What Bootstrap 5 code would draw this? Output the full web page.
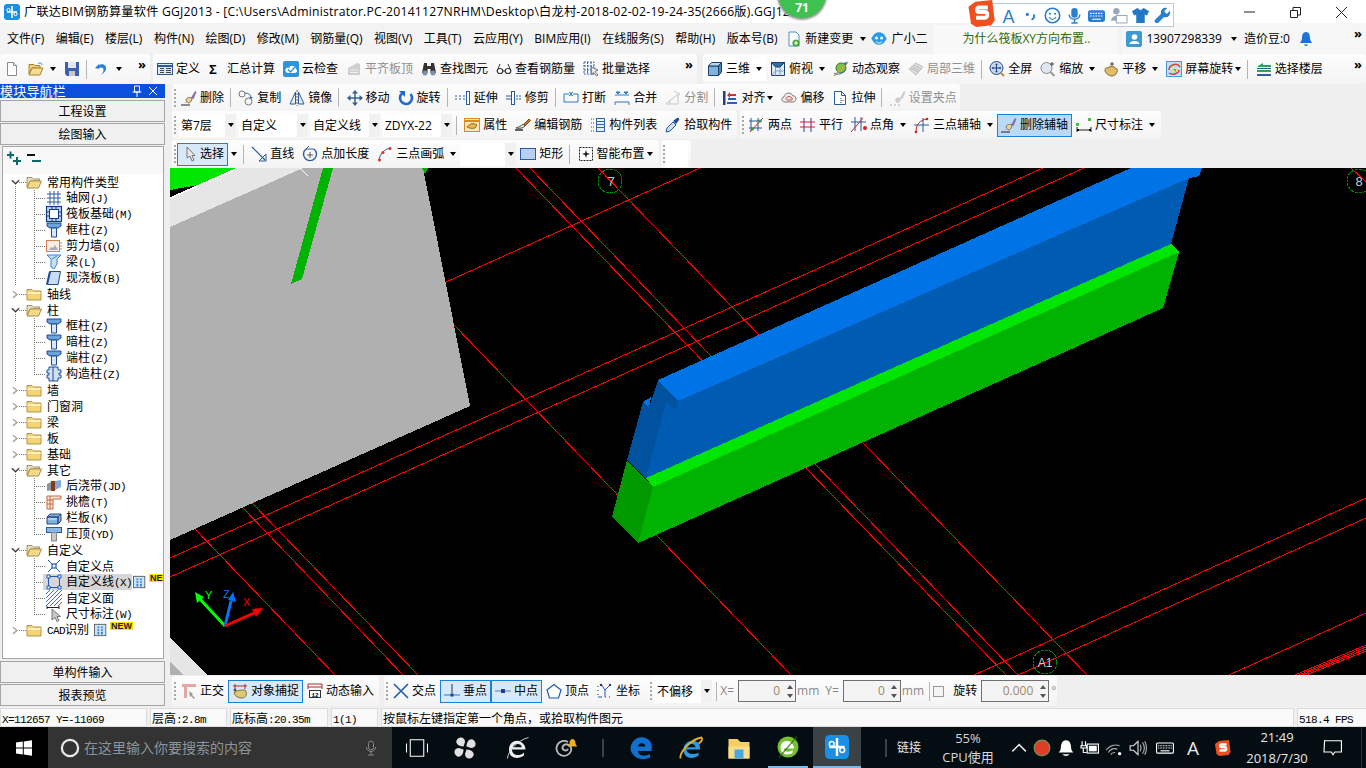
<!DOCTYPE html>
<html lang="zh-CN">
<head>
<meta charset="UTF-8">
<title>广联达BIM钢筋算量软件 GGJ2013</title>
<link href="https://cdn.jsdelivr.net/npm/bootstrap@5.3.3/dist/css/bootstrap.min.css" rel="stylesheet">
<style>
html,body{height:100%;overflow:hidden}
body{width:1366px;height:768px;background:#efefef;color:#000;font:12px/16px "Open Sans","Noto Sans CJK SC",sans-serif}
.ico{width:16px;height:16px;flex:none;display:block;overflow:visible}
.lat{font:11px/16px "Liberation Mono",monospace;letter-spacing:-.6px}
.simfont{font-family:"Noto Sans CJK SC",sans-serif}

/* title + menu */
.title-bar{height:23px;background:#fff;white-space:nowrap;overflow:hidden}
.title-bar .ttl{margin-left:4px;font-size:12.2px;letter-spacing:.22px;line-height:23px;width:772px;overflow:hidden}
.win-btn{width:46px;height:23px}
.win-group{margin-right:2px}
.float-badge{position:absolute;left:778px;top:-30px;width:48px;height:48px;border-radius:50%;background:#3fc152;box-shadow:0 1px 2px 1px #999;color:#fff;font-weight:700;text-align:center;padding-top:31px;line-height:14px}
.sg-logo{position:absolute;left:968px;top:0;width:28px;height:27px}
.sg-panel{position:absolute;left:990px;top:3px;width:184px;height:24px;background:#fff;border:1px solid #b4cbde;padding-left:5px;gap:5px}
.sg-panel .ico{width:17px;height:17px}
.menu-row{height:31px;background:#f3f3f3}
.menu-row .mi{padding:0 5.75px;line-height:31px;white-space:nowrap}
.menu-row .mi:first-child{padding-left:7px}
.menu-tail{height:31px;margin-left:3px}
.menu-tail .car{margin-left:7px}
.menu-tail .xe{margin-left:5px}
.news{width:185px;height:29px;background:#f8f8f8;margin:2px 4px 0 6px;border-radius:3px 3px 0 0;color:#2f6a0a;padding-left:29px;line-height:27px}
.user-box{height:31px;background:#f6f6f6}
.user-box .car{margin:0 7px 0 9px}

/* toolbars */
.tbar{height:28px;background:linear-gradient(#fdfdfd,#f4f4f4);border-radius:3px;white-space:nowrap;flex:none}
.t-top{height:30px}
.t-fill{flex:1 1 0;min-width:0}
.tool{display:flex;align-items:center;height:23px;padding:0 3px;gap:3px;border:1px solid transparent;flex:none}
.tool-off{color:#8f8f8f}
.tool-on{background:#d7e9f8;border-color:#1a80d8}
.tool-on2{background:#b9d9f5;border-color:#1a80d8}
.tool-first{padding-left:5px;gap:1px}
.tool-white{background:#fff}
.t-sep{width:1px;height:19px;background:#b5b5b5;margin:0 3.25px 0 2px;flex:none}
.t-grip{width:5px;height:18px;flex:none;background:repeating-linear-gradient(#a8a8a8 0 2px,transparent 2px 4px) 2px 0/2px 100% no-repeat}
.car{width:0;height:0;border:3.5px solid transparent;border-top:4px solid #000;border-bottom:0;margin-left:-1px;flex:none}
.car-wide{margin-left:2.5px;margin-right:.5px}
.car-solo{margin:0 4px 0 3px}
.tool>svg+.car{margin-left:3px}
.more{margin-left:auto;padding-right:4px;font-weight:700;font-size:13px;line-height:12px;align-self:flex-start;padding-top:4px}
.combo{height:23px;background:#f1f1f1;margin-left:3px;flex:none}
.t-grip+.combo{margin-left:2px}
.tool+.combo{margin-left:0}
.combo+.t-sep{margin-left:4px}
.combo>span{display:block;flex:1;height:23px;background:#fff;line-height:23px;padding-left:2px;overflow:hidden}
.combo>i{width:11px;display:flex;justify-content:center;align-items:center}
.combo .car{margin:0}
.row-a{height:27px;margin-left:2px}
.row-b{height:29px;margin-left:2px}
.row-c{height:28px;margin-left:2px}
.blank-tail{width:22px;height:26px;background:#fff}

/* left nav */
.nav-col{width:165px;flex:none}
.nav-head{height:14px;background:#0a50dc;color:#fff;font-size:13px;line-height:14px;letter-spacing:.2px;margin-bottom:2px}
.nav-btn{display:block;width:165px;height:22px;padding:0;border:1px solid #a5a5a5;border-radius:0;background:#f0f0f0;color:#000;font-size:12px;line-height:20px;margin-bottom:1px}
.nav-box{height:513px;margin:0 1px 2px 2px;background:#fff;border:1px solid #a5a5a5;overflow:hidden}
.tree-tools{height:27px;background:#f8f8f8;padding:3px 0 0 3px}
.tree-row{height:16px;display:flex;align-items:center;white-space:nowrap;padding-left:8px;
  --vd:repeating-linear-gradient(#777 0 1px,transparent 1px 2px);--hd:repeating-linear-gradient(90deg,#777 0 1px,transparent 1px 2px)}
.tree-row .chev{width:9px;height:9px;flex:none;margin-right:6px}
.tree-row .lb{margin-left:5px}
.lv0{background:var(--hd) 16px 8px/7px 1px no-repeat}
.lv0.is-open{background:var(--hd) 16px 8px/7px 1px no-repeat,var(--vd) 12px 12px/1px 4px no-repeat}
.lv1{padding-left:43px;background:var(--vd) 12px 0/1px 16px no-repeat,var(--vd) 31px 0/1px 16px no-repeat,var(--hd) 31px 8px/12px 1px no-repeat}
.lv1.is-last{background:var(--vd) 12px 0/1px 16px no-repeat,var(--vd) 31px 0/1px 9px no-repeat,var(--hd) 31px 8px/12px 1px no-repeat}
.lv1 .lb{margin-left:4px}
.tree-sel{background:#d6d6d6;display:flex;align-items:center;margin-left:-3px;padding-left:3px;height:16px}
.new-ico{width:14px;height:16px;flex:none;margin-left:1px}
.new-tag{font:700 9px/8px "Liberation Sans",sans-serif;background:#ffe000;color:#222;padding:0 1px;align-self:flex-start;margin-left:2px}

/* canvas + bottom */
.gl-view{display:block;width:1196px;height:507px;background:#000}
.snap-bar{height:33px;padding:1px 0 0 2px;background:#efefef}
.snap-bar .tbar{height:30px}
.num{width:58px;height:22px;border:1px solid #707070;background:#f4f4f4;color:#a08868;text-align:right;flex:none;line-height:20px}
.num-wide{width:68px}
.num>span{flex:1;padding-right:4px}
.spin{width:11px;display:flex;flex-direction:column;align-items:center;gap:5px}
.spin i{border:3px solid transparent}
.spin .u{border-bottom:4px solid #555;border-top:0}
.spin .d{border-top:4px solid #555;border-bottom:0}
.mut{color:#8a8a8a;flex:none}
.chk{width:11px;height:11px;border:1px solid #999;background:#f4f4f4;margin-right:9px;flex:none}
.g1{margin-left:1px}.g2{margin-left:2px}.g3{margin-left:3px}.g4{margin-left:4px}.g5{margin-left:5px}.g6{margin-left:6px}

/* status */
.stat{height:19px;gap:3px}
.stat>div{height:19px;background:#f9f9f9;border:1px solid #dcdcdc;padding-left:1px;line-height:17px;white-space:nowrap;overflow:hidden;flex:none}

/* taskbar */
.taskbar{height:41px;background:#040d12;color:#e8e8e8}
.task-win{width:48px;height:41px;background:#000}
.task-search{width:344px;height:41px;background:#333;color:#8c939c;font-size:14px;padding-left:12px}
.search-ring{width:20px;height:20px}
.search-mic{margin-right:13px}
.slot{height:41px;display:flex;align-items:center;justify-content:center;flex:none}
.slot .ico{width:24px;height:24px}
.slot-on{background:#3a4246;border-bottom:2px solid #76b9ed}
.slot-open{border-bottom:2px solid #76b9ed}
.t-div{width:2px;height:18px;background:#3b4246;flex:none}
.tray{gap:6px;margin-left:11px}
.tray .ico{width:18px;height:18px}
.tray .kb{width:24px}
.tray .sg{width:16px;height:16px;margin-left:8px}
.tray .big-a{font-size:19px;line-height:18px;margin-left:4px;width:14px}
.links{margin-left:10px;width:24px;white-space:nowrap}
.cpu{font-size:13px;line-height:19px;text-align:center;width:60px;color:#d8d8d8;margin-left:17px}
.clk{font-size:13px;line-height:21px;text-align:center;color:#e8e8e8;width:64px;margin-left:14px}
.notif-ico{width:18px;height:18px;margin-left:15px}
.desk-line{width:1px;height:41px;background:#2a3036;margin-left:19px}
</style>
</head>
<body class="d-flex flex-column position-relative">

<!-- title bar -->
<div class="title-bar d-flex align-items-center">
  <svg class="ico ms-1" data-i="app"></svg>
  <div class="ttl">广联达BIM钢筋算量软件 GGJ2013 - [C:\Users\Administrator.PC-20141127NRHM\Desktop\白龙村-2018-02-02-19-24-35(2666版).GGJ12</div>
  <div class="ms-auto d-flex win-group">
    <div class="win-btn d-flex align-items-center justify-content-center"><svg class="ico" data-i="wmin"></svg></div>
    <div class="win-btn d-flex align-items-center justify-content-center"><svg class="ico" data-i="wmax"></svg></div>
    <div class="win-btn d-flex align-items-center justify-content-center"><svg class="ico" data-i="wclose"></svg></div>
  </div>
</div>
<div class="float-badge">71</div>
<div class="sg-panel d-flex align-items-center">
  <svg class="ico ms-1" data-i="sgA"></svg><svg class="ico" data-i="sgP"></svg><svg class="ico" data-i="sgF"></svg><svg class="ico" data-i="sgM"></svg><svg class="ico" data-i="sgK"></svg><svg class="ico" data-i="sgU"></svg><svg class="ico" data-i="sgT"></svg><svg class="ico" data-i="sgW"></svg>
</div>
<svg class="sg-logo" data-i="sogou"></svg>

<!-- menu -->
<div class="menu-row d-flex align-items-start">
  <div class="d-flex align-items-center" id="menus"></div>
  <div class="d-flex align-items-center menu-tail">
    <svg class="ico" data-i="newchg"></svg><span class="g3">新建变更</span><i class="car"></i>
    <svg class="ico xe" data-i="xiaoer"></svg><span class="g4">广小二</span>
  </div>
  <div class="news">为什么筏板XY方向布置..</div>
  <div class="d-flex align-items-center flex-grow-1 user-box">
    <svg class="ico g4" data-i="user"></svg><span class="g4">13907298339</span><i class="car"></i><span>造价豆:0</span>
    <svg class="ico ms-2" data-i="bellb"></svg><span class="more">»</span>
  </div>
</div>

<!-- main toolbar -->
<div class="d-flex" style="height:30px">
  <div class="tbar t-top d-flex align-items-center" style="width:150px" data-spec="page: open:v save: | undo:v"><span class="more">»</span></div>
  <div class="tbar t-top d-flex align-items-center" style="width:544px;margin-left:3px" data-spec="define:定义 sigma:汇总计算 cloudchk:云检查 flush:平齐板顶! binoc:查找图元 glass:查看钢筋量 batch:批量选择"><span class="more">»</span></div>
  <div class="tbar t-top t-fill d-flex align-items-center" style="margin-left:6px" data-spec="cube:三维V# topv:俯视V orbit:动态观察 part3d:局部三维! | fit:全屏 zoomin:缩放V pan:平移V spin3:屏幕旋转v | floor:选择楼层"><span class="more">»</span></div>
</div>

<div class="d-flex flex-grow-1" style="min-height:0">
  <!-- left nav -->
  <div class="nav-col d-flex flex-column">
    <div class="nav-head d-flex align-items-center"><span class="simfont">模块导航栏</span><svg class="ico ms-auto" data-i="pinw"></svg><svg class="ico me-1" data-i="closew"></svg></div>
    <button class="btn nav-btn simfont" type="button">工程设置</button>
    <button class="btn nav-btn simfont" type="button">绘图输入</button>
    <div class="nav-box">
      <div class="tree-tools d-flex"><svg class="ico" data-i="plus2"></svg><svg class="ico ms-1" data-i="minus2"></svg></div>
      <div class="simfont" id="tree"></div>
    </div>
    <button class="btn nav-btn simfont" type="button">单构件输入</button>
    <button class="btn nav-btn simfont" type="button">报表预览</button>
  </div>

  <!-- right work area -->
  <div class="d-flex flex-column flex-grow-1" style="margin-left:5px;min-width:0">
    <div class="d-flex row-a">
      <div class="tbar d-flex align-items-center" style="width:788px;height:27px" data-spec="grip erase:删除 | copy:复制 mirror:镜像 | move:移动 rot:旋转 | extend:延伸 trim:修剪 | brk:打断 merge:合并 split:分割! | align:对齐v offset:偏移 stretch:拉伸 | erasegray:设置夹点!"></div>
    </div>
    <div class="d-flex row-b">
      <div class="tbar d-flex align-items-center" style="width:565px" data-spec="grip [57:第7层] [69:自定义] [69:自定义线] [69:ZDYX-22] | attr:属性 rebar:编辑钢筋 lst:构件列表 pick:拾取构件"></div>
      <div class="tbar d-flex align-items-center" style="width:421px;margin-left:3px" data-spec="grip two:两点 para:平行 angle:点角V arc3:三点辅轴V erase:删除辅轴% dim:尺寸标注V"></div>
    </div>
    <div class="d-flex row-c">
      <div class="tbar d-flex align-items-center" style="width:487px" data-spec="grip arrow:选择~ car | line:直线 plen:点加长度 arc:三点画弧V [56:] rect:矩形 | smart:智能布置v"></div>
      <div class="tbar d-flex align-items-center" style="width:30px;margin-left:2px" data-spec="grip"><span class="blank-tail"></span></div>
    </div>

    <!-- 3D view -->
    <svg class="gl-view" viewBox="170 168 1196 507" shape-rendering="crispEdges">
      <g stroke="#f00" stroke-width="1" fill="none">
        <path d="M700 168 446 282M1043 168 170 558M1084 168 170 577"/>
        <path d="M598 168 1087 675M530 168 1018 675M516 168 1006 675M454 325 791 675"/>
        <path d="M195 529 335 675M252 503 418 675M243 508 403 675"/>
        <path d="M974 675 1366 498M1018 675 1366 518M1229 675 1366 613"/>
        <path d="M1295 675 1366 645M1299 675 1366 647M1302 675 1366 649M1306 675 1366 651"/>
        <path d="M1351 168 1366 182"/>
      </g>
      <!-- slab -->
      <path d="M170 168H293L170 190z" fill="#00e600"/>
      <path d="M170 198 238 168H303L170 227z" fill="#e6e6e6"/>
      <path d="M170 198 238 168" stroke="#fff" stroke-width="1.5" fill="none"/>
      <path d="M170 227 303 168H423L470 406 170 540z" fill="#b0b0b0"/>
      <path d="M300 168 308 176" stroke="#fff" fill="none"/>
      <path d="M323 168H333L302 279 291 284z" fill="#00b300"/>
      <path d="M422 168H428L425 174z" fill="#00b300"/>
      <path d="M170 637 207 675H170z" fill="#e6e6e6"/>
      <path d="M170 662 183 675H170z" fill="#b0b0b0"/>
      <!-- wall -->
      <path d="M678 401 676 410 666 402 646 478 1171 244 1189 178z" fill="#005cb3"/>
      <path d="M643 402 649 408 658 380 666 402 646 478 627 460z" fill="#00529f"/>
      <path d="M658 380 678 401 676 410 666 402z" fill="#00529f"/>
      <path d="M658 380 1131 168H1202L1199 176 1189 178 678 401z" fill="#0073e6"/>
      <path d="M643 402 651 397 649 408z" fill="#0073e6"/>
      <path d="M646 478 1171 244 1179 252 653 487z" fill="#00e600"/>
      <path d="M653 487 1179 252 1163 308 638 543z" fill="#00b300"/>
      <path d="M627 460 653 487 638 543 612 517z" fill="#009900"/>
      <!-- axis bubbles -->
      <g fill="none" stroke="#080" stroke-dasharray="3 1">
        <circle cx="610" cy="181" r="12"/><circle cx="1359" cy="181" r="12"/><circle cx="1045" cy="662" r="12"/>
      </g>
      <g fill="#ccc" font-family="Liberation Sans,sans-serif" font-size="13" text-anchor="middle">
        <text x="611" y="186">7</text><text x="1359" y="186">8</text><text x="1045" y="667" font-size="12">A1</text>
      </g>
      <!-- ucs -->
      <g shape-rendering="auto">
        <path d="M225 626 199 598" stroke="#0f0" stroke-width="3"/><path d="M195 592 204 597 197 603z" fill="#0f0"/>
        <path d="M225 626 231 601" stroke="#07f" stroke-width="3"/><path d="M233 592 236 602 228 600z" fill="#07f"/>
        <path d="M225 626 254 613" stroke="#f00" stroke-width="3"/><path d="M263 608 256 617 252 609z" fill="#f00"/>
        <g font-family="Liberation Sans,sans-serif" font-size="11"><text x="205" y="599" fill="#0f0">Y</text><text x="223" y="598" fill="#07f">Z</text><text x="243" y="606" fill="#f00">X</text></g>
      </g>
    </svg>

    <!-- snap bar -->
    <div class="snap-bar d-flex">
      <div class="tbar d-flex align-items-center" style="width:207px" data-spec="grip ortho:正交 snap:对象捕捉^ dyn:动态输入"></div>
      <div class="tbar d-flex align-items-center" style="width:264px;margin-left:5px" data-spec="grip xpt:交点 perp:垂点^ mid:中点^ vertex:顶点 coord:坐标"></div>
      <div class="tbar d-flex align-items-center" style="width:409px" data-spec="grip [57:不偏移] |">
        <span class="mut">X=</span>
        <div class="num d-flex align-items-center g4"><span>0</span><div class="spin"><i class="u"></i><i class="d"></i></div></div>
        <span class="mut g1">mm</span><span class="mut g6">Y=</span>
        <div class="num d-flex align-items-center g4"><span>0</span><div class="spin"><i class="u"></i><i class="d"></i></div></div>
        <span class="mut g1">mm</span><span class="t-sep g5"></span>
        <span class="chk"></span><span class="flex-none">旋转</span>
        <div class="num num-wide d-flex align-items-center g4"><span>0.000</span><div class="spin"><i class="u"></i><i class="d"></i></div></div>
        <span class="mut g2">°</span>
      </div>
    </div>
  </div>
</div>

<!-- status bar -->
<div class="stat d-flex simfont" id="stat">
  <div style="width:147px" data-l>X=112657 Y=-11069</div>
  <div style="width:77px" data-l>层高:2.8m</div>
  <div style="width:98px" data-l>底标高:20.35m</div>
  <div style="width:47px" data-l>1(1)</div>
  <div style="width:913px">按鼠标左键指定第一个角点，或拾取构件图元</div>
  <div style="width:70px" data-l>518.4 FPS</div>
</div>

<!-- taskbar -->
<div class="taskbar d-flex align-items-center">
  <div class="task-win d-flex align-items-center justify-content-center"><svg class="ico" data-i="winlogo"></svg></div>
  <div class="task-search d-flex align-items-center">
    <svg class="ico search-ring" data-i="cortana"></svg>
    <span class="ms-1">在这里输入你要搜索的内容</span>
    <svg class="ico ms-auto search-mic" data-i="mic"></svg>
  </div>
  <div class="d-flex" id="apps"></div>
  <div class="t-div" style="margin-left:24px"></div>
  <span class="links">链接</span>
  <div class="cpu">55%<br>CPU使用</div>
  <div class="tray d-flex align-items-center">
    <svg class="ico" data-i="chevup"></svg><svg class="ico" data-i="ball"></svg><svg class="ico" data-i="bellw"></svg><svg class="ico" data-i="batt"></svg><svg class="ico" data-i="wifi"></svg><svg class="ico" data-i="vol"></svg><svg class="ico kb" data-i="kbd"></svg><span class="big-a">A</span><svg class="ico sg" data-i="sogou"></svg>
  </div>
  <div class="clk">21:49<br>2018/7/30</div>
  <svg class="ico notif-ico" data-i="notif"></svg>
  <div class="desk-line"></div>
</div>

<script>
// icon shapes, all drawn on a 16x16 box
const I = {
  app:'<rect width="16" height="16" rx="3" fill="#1a8fe6"/><path d="M8 2v12M3 8h10" stroke="#fff" stroke-width="1.6" fill="none"/><circle cx="4.5" cy="6" r="1.6" fill="none" stroke="#fff"/><circle cx="11.5" cy="10" r="1.6" fill="none" stroke="#fff"/>',
  wmin:'<path d="M3 8h11" stroke="#222"/>', wmax:'<path d="M3.5 6.5h7v7h-7zM6 6V3.5h7.5V11H11" stroke="#222" fill="none"/>', wclose:'<path d="M3 3l11 11M14 3 3 14" stroke="#222" fill="none"/>',
  sogou:'<path d="M4 1 14 0l1.5 12-2 3-9 1-3-2L0 4z" fill="#f0501e"/><path d="M11.5 4.5H6.2c-1.5 0-1.5 2.6 0 2.6h3.6c1.7 0 1.7 3.4 0 3.4H4.5" stroke="#fff" stroke-width="2.4" fill="none"/>',
  sgA:'<text x="8" y="15" font-family="Liberation Sans,sans-serif" font-size="17" text-anchor="middle" fill="#2b7fcf">A</text>',
  sgP:'<circle cx="5" cy="7" r="1.5" fill="#2b7fcf"/><path d="M11 7c1 2 0 4-2 5" stroke="#2b7fcf" stroke-width="1.8" fill="none"/>',
  sgF:'<circle cx="8" cy="8" r="6.8" fill="none" stroke="#2b7fcf" stroke-width="1.5"/><circle cx="5.6" cy="6.3" r="1" fill="#2b7fcf"/><circle cx="10.4" cy="6.3" r="1" fill="#2b7fcf"/><path d="M4.8 9.5c1.5 3 5 3 6.4 0" stroke="#2b7fcf" fill="none"/>',
  sgM:'<rect x="5" y="1" width="6" height="9" rx="3" fill="#2b7fcf"/><path d="M3 7c0 6 10 6 10 0M8 12v3M5 15h6" stroke="#2b7fcf" stroke-width="1.4" fill="none"/>',
  sgK:'<rect y="3" width="16" height="11" rx="2" fill="#2b7fcf"/><path d="M2 6h12M2 8.5h12" stroke="#fff" stroke-dasharray="1.5 1" fill="none"/><path d="M4 11.5h8" stroke="#fff"/>',
  sgU:'<circle cx="6" cy="4" r="3" fill="#9aa8b5"/><path d="M1 13c0-6 9-6 9 0z" fill="#9aa8b5"/><rect x="6" y="8" width="10" height="7" fill="#fff" stroke="#9aa8b5"/>',
  sgT:'<path d="M5 1 8 3l3-2 5 3-2 4-2-1v8H4V7L2 8 0 4z" fill="#1f78c8"/>',
  sgW:'<path d="M15 3.5 12 6.5 9.5 4 12.5 1a4.5 4.5 0 0 0-6 5.5L1 12c-1.5 2 1 4 3 2.8L9.5 9.5A4.5 4.5 0 0 0 15 3.5z" fill="#2b7fcf"/>',
  newchg:'<path d="M3 1h7l3 3v11H3z" fill="#fff" stroke="#4a90d0"/><circle cx="10" cy="12" r="3.6" fill="#4aa83a"/><path d="M8 12h4M10 10v4" stroke="#fff"/>',
  xiaoer:'<path d="M2 5c2-5 10-5 12 0 2 1 2 4 0 5-2 5-10 5-12 0-2-1-2-4 0-5z" fill="#2b9ae8"/><circle cx="5.5" cy="7" r="1.5" fill="#fff"/><circle cx="10.5" cy="7" r="1.5" fill="#fff"/><path d="M5 10.5c2 2 4 2 6 0" stroke="#fff" fill="none"/>',
  user:'<rect width="16" height="16" rx="2" fill="#3d9ad0"/><circle cx="8.5" cy="6" r="2.8" fill="#fff"/><path d="M3.5 13c0-4 10-4 10 0z" fill="#fff"/>',
  bellb:'<path d="M8 1c3 0 4 3 4 6s2 4 2 5H2c0-1 2-2 2-5s1-6 4-6z" fill="#1c74d8"/><path d="M6 13.5c1 2 3 2 4 0z" fill="#1c74d8"/>',
  page:'<path d="M3.5 1.5h6l3 3v10h-9z" fill="#fff" stroke="#8c8c8c"/><path d="M9.5 1.5v3h3" fill="#ddd" stroke="#8c8c8c"/>',
  open:'<path d="M1 3.5h5l1 1h5V7H4L1 13z" fill="#f0cf7c" stroke="#a8842e"/><path d="M4 7h11l-3 7H1z" fill="#f6dc92" stroke="#a8842e"/><path d="M10 3c2-2 4-1 4 1" stroke="#2d7fd8" fill="none"/>',
  save:'<path d="M1 1h14v14H3l-2-2z" fill="#3c60ac"/><rect x="4" y="1" width="8" height="6" fill="#dfe7f4"/><rect x="5" y="10" width="6" height="5" fill="#c8c8c8"/>',
  undo:'<path d="M5 3v5l-4-1zM4 4.5c5-3 9 0 8 4-.5 2-3 4.5-5 5 2-1.5 2.5-3 2.5-5 0-2-3-3-5-1z" fill="#2f7fd8"/>',
  define:'<rect x=".5" y="2.5" width="15" height="11" fill="#dbe8f6" stroke="#2a5a9a"/><path d="M.5 5h15" stroke="#2a5a9a" stroke-width="2"/><path d="M3 7.5h4M3 9.5h4M3 11.5h4M9 7.5h5M9 9.5h5M9 11.5h5" stroke="#444"/>',
  sigma:'<text x="1" y="13" font-family="Liberation Sans,sans-serif" font-weight="700" font-size="13" fill="#000">Σ</text>',
  cloudchk:'<rect width="16" height="16" rx="2" fill="#2f92dc"/><path d="M3 11c-2-3 1-5 3-4 1-3 6-3 7 1 2 1 1 4-1 4H4z" fill="#fff"/><path d="M5 8.5 7.5 11 12 6" stroke="#2f92dc" stroke-width="1.4" fill="none"/>',
  flush:'<path d="M2 7 11 2l3 1v11H2z" fill="#cfcfcf"/><path d="M4 9h8M4 11.5h8" stroke="#eee"/>',
  binoc:'<path d="M3 2h3v3h4V2h3l2 10h-5.5V8h-3v4H1z" fill="#333"/><circle cx="4" cy="12" r="2.5" fill="#7c92aa"/><circle cx="12" cy="12" r="2.5" fill="#7c92aa"/>',
  glass:'<path d="M4 3 1.5 9M12 3l2.5 6" stroke="#333" fill="none"/><ellipse cx="4" cy="10" rx="2.8" ry="2.5" fill="#fff" stroke="#333" stroke-width="1.2"/><ellipse cx="12" cy="10" rx="2.8" ry="2.5" fill="#fff" stroke="#333" stroke-width="1.2"/><path d="M7 10h2" stroke="#333"/>',
  batch:'<path d="M1 1h10v12H1zM1 5h10M1 9h10M4.5 1v12M8 1v12" stroke="#3a66b0" fill="none" stroke-dasharray="2 1"/><path d="M8 6l7 3-3 1.5L15 14l-1.5 1-3-3.5L9 14z" fill="#eee" stroke="#777"/>',
  cube:'<path d="M1.5 5v9.5h10V5z" fill="#7fb4e0" stroke="#1f3f66"/><path d="M1.5 5l3-3.5h10L11.5 5z" fill="#b8d6f0" stroke="#1f3f66"/><path d="M11.5 14.5l3-3.500V1.500L11.500 5z" fill="#4a86bd" stroke="#1f3f66"/>',
  topv:'<path d="M1.5 1.5h13v13h-13z" fill="#d9e9f7" stroke="#1f3f66"/><path d="M1.5 1.5h13L10 6H5.5z" fill="#2d6ea8" stroke="#1f3f66"/><path d="M5.5 6v8.5M10 6v8.5M1.5 14.5 5.5 10h8" stroke="#7fa0c0" fill="none"/>',
  orbit:'<circle cx="8" cy="7" r="5" fill="#7cc04a" stroke="#3a7a1a"/><path d="M1 15 15 1" stroke="#c9a53a" stroke-width="1.5"/><path d="M10 2l4-1-1 4z" fill="#3c70b8"/><path d="M1 12c4 3 9 0 11-3" stroke="#3c70b8" fill="none"/>',
  part3d:'<path d="M1 8 8 2l7 4-7 8z" fill="#dcdcdc" stroke="#c0c0c0"/><path d="M4 5.5l7 4M6 4l7 4M3 7l7 4" stroke="#bbb" fill="none"/>',
  fit:'<circle cx="7.5" cy="7" r="6.5" fill="#c5d8ec" stroke="#2c4a86"/><path d="M7.5 2.5v9M3 7h9M6.5 3.5h2M6.5 10.5h2M4 6v2M11 6v2" stroke="#1f3f86"/><path d="M12 12l3 3" stroke="#c88a2a" stroke-width="2"/>',
  zoomin:'<circle cx="6.5" cy="7" r="5.5" fill="#dfe8f2" stroke="#888"/><path d="M10.5 11l4 4" stroke="#999" stroke-width="2"/><path d="M12 1v4M10 3h4" stroke="#444"/>',
  pan:'<path d="M2 9c0-2 2-3 4-2 0-2 2-2 3-1 1-1 3 0 3 1 2 0 3 2 2 4-1 3-3 4-6 4-3-1-6-3-6-6z" fill="#e0bd68" stroke="#8a6a28"/><path d="M9 1v4M7 3h4" stroke="#444"/>',
  spin3:'<rect x=".5" y=".5" width="15" height="15" fill="#bfe0f2" stroke="#4a9ad0"/><path d="M3 9c0-5 8-8 11-3" stroke="#e03c28" stroke-width="1.5" fill="none"/><path d="M13 9c0 3-6 6-10 3" stroke="#e03c28" stroke-width="1.5" fill="none"/><path d="M5 8h7v3H5z" fill="#f0d66a"/><path d="M7 8h3v3" fill="#5ab048"/>',
  floor:'<path d="M2 5l5-3v2h8v2H2zM1 9h14v2H1z" fill="#3a9a58"/><path d="M1 13h14v2H1zM1 7h14v1H1z" fill="#2d5fa8"/>',
  erase:'<path d="M10 8 14 1l1.5 1-3 7z" fill="#8a6aa8"/><path d="M5 10c1-3 4-3 6-2 0 3-2 5-4 5z" fill="#e8d0a0" stroke="#8a7048"/><path d="M0 15h9" stroke="#222"/><path d="M1 13c2 0 4-1 5-2l1 2z" fill="#bbb"/>',
  erasegray:'<path d="M10 8 14 1l1.5 1-3 7zM5 10c1-3 4-3 6-2 0 3-2 5-4 5z" fill="#ccc"/><path d="M0 15h2M4 15h2M8 15h2" stroke="#aaa"/>',
  copy:'<circle cx="4" cy="4" r="3" fill="none" stroke="#777"/><circle cx="10.5" cy="11.5" r="3.5" fill="none" stroke="#777"/><path d="M7 3c4 0 6 2 6 5" stroke="#2d6ab0" fill="none"/><path d="M11 7h4l-2 2z" fill="#2d6ab0"/>',
  mirror:'<path d="M6.5 2v12H1zM9.5 2v12H15z" fill="#e8f0f8" stroke="#2a5a9a"/><path d="M8 0v16" stroke="#666" stroke-dasharray="2 1"/>',
  move:'<path d="M8 1v14M1 8h14" stroke="#355f90" stroke-width="1.5"/><path d="M8 0l3 3.5H5zM8 16l-3-3.5h6zM0 8l3.5-3v6zM16 8l-3.5 3V5z" fill="#355f90"/>',
  rot:'<path d="M12.5 4A6 6 0 1 1 4 3.5" stroke="#1f6ad0" stroke-width="2.6" fill="none"/><path d="M1 1h6v6z" fill="#1f6ad0"/>',
  extend:'<path d="M0 6h2M4 6h2M8 6h2M0 9h2M4 9h2M8 9h2" stroke="#2a5a9a"/><rect x="11.5" y="1.5" width="3" height="13" fill="#fff" stroke="#2a5a9a"/>',
  trim:'<rect x="5.5" y="1.5" width="3" height="13" fill="#fff" stroke="#2a5a9a"/><path d="M0 6h5M0 9h5M10 6h2M13 6h2M10 9h2M13 9h2" stroke="#2a5a9a"/>',
  brk:'<path d="M1 4h5M10 4h5M1 12h14M1 4v8M15 4v8" stroke="#2a78c8" fill="none"/><path d="M6 2l3 2-3 2M10 2 7 4l3 2" stroke="#2a78c8" fill="none"/>',
  merge:'<path d="M1 5h14M1 12h14" stroke="#2a78c8"/><path d="M2 2h4l-2 2zM10 2h4l-2 2zM1 12v3M15 12v3" stroke="#2a78c8" fill="#2a78c8"/>',
  split:'<path d="M1 14 13 4v10zM9 1l6 3-3 3" stroke="#c8c8c8" fill="none"/><path d="M5 14v-4" stroke="#ccc"/>',
  align:'<rect x="1" y="1" width="2.5" height="14" fill="#1f3f86"/><path d="M5 12h10v2H5z" fill="#2d5fb0"/><path d="M6 8h8v2H6z" fill="#2d5fb0"/><path d="M5 5l3-3v2h6v2H8v2z" fill="#d03030"/>',
  offset:'<path d="M4 12c-4 0-4-5-1-5 0-4 7-6 9-1 4-.5 4 6 0 6z" fill="#eee" stroke="#777"/><path d="M6 10c-2-1-1-3 1-3 0-1 3-1 3 1 2 0 2 2 0 2z" fill="none" stroke="#d84030"/>',
  stretch:'<path d="M2.5 1.5h7l4 4v9h-11z" fill="#fff" stroke="#2a5a9a"/><path d="M9.5 1.5v4h4" fill="none" stroke="#2a5a9a"/><path d="M9 8v6M11 10v1" stroke="#333" stroke-dasharray="1 1"/>',
  attr:'<rect x=".5" y="1.5" width="15" height="13" fill="#fbe6c0" stroke="#d88a28"/><path d="M.5 4h15" stroke="#d88a28" stroke-width="2"/><path d="M3 10c3-4 7-4 10-2l-2 3c-3 1-6 0-8-1z" fill="#e8b848" stroke="#966a20"/>',
  rebar:'<path d="M0 13h8" stroke="#222" stroke-width="1.4"/><path d="M1 11c3-1 5-2 7-4l2 2c-2 2-5 3-9 2z" fill="#e8e0c8" stroke="#555"/><path d="M9 7l5-5 1.5 1.5-5 5z" fill="#c87830" stroke="#7a4818"/>',
  lst:'<path d="M1 2h3M1 6h3M1 10h3M1 14h3" stroke="#445" stroke-dasharray="1 1"/><rect x="6.5" y="1.5" width="8" height="13" fill="#e6eef8" stroke="#3a66b0"/><path d="M7 4.5h7M7 7.5h7M7 10.5h7" stroke="#3a66b0"/>',
  pick:'<path d="M1 15l1-4 6-6 3 3-6 6z" fill="#cfe0f4" stroke="#2a5aa8"/><path d="M8 4 12 1c1-1 3 1 2 2l-3 4z" fill="#1f4a96"/>',
  two:'<path d="M2 1v13M9 1v13M0 4h13M0 11h13" stroke="#2a5a9a"/><path d="M1 15 14 1" stroke="#c02828"/><circle cx="3.5" cy="12" r="1.5" fill="#3a9a38"/><circle cx="11" cy="4" r="1.5" fill="#3a9a38"/>',
  para:'<path d="M4 1v14M11 1v14" stroke="#2a3a9a"/><path d="M0 5h15M0 10h15" stroke="#c02828"/>',
  angle:'<path d="M4 0v14M10 0v14M0 5h15" stroke="#2a5a9a"/><path d="M0 15 12 1" stroke="#c02828"/><circle cx="14" cy="11" r="2" fill="#e02020"/>',
  arc3:'<path d="M0 8h15M9 1v14" stroke="#2a5a9a"/><path d="M2 15C2 7 6 3 13 2" stroke="#c02828" fill="none"/><circle cx="13" cy="2" r="1.3" fill="#c02828"/><circle cx="2" cy="15" r="1.3" fill="#c02828"/>',
  dim:'<path d="M1 10v5M15 10v5M1 13h14" stroke="#222"/><path d="M1 13h2M13 13h2" stroke="#000" stroke-width="2"/><rect y="6" width="3" height="3" fill="#4ac04a"/><rect x="12" y="1" width="3" height="3" fill="#4ac04a"/>',
  arrow:'<path d="M4 1v11l3-2 2 5 2-1-2-4.5h3z" fill="#e8e8e8" stroke="#777"/>',
  line:'<path d="M1 1 14 14" stroke="#2a5a9a" stroke-width="1.2"/><path d="M15 15H8l7-7z" fill="none" stroke="#2a5a9a"/>',
  plen:'<path d="M4 3A6.5 6.5 0 1 0 12 3" stroke="#2a5a9a" stroke-width="1.4" fill="none"/><path d="M12 3 4 3l3-3" stroke="#2a5a9a" fill="none"/><path d="M8 6v6M5 9h6" stroke="#555"/>',
  arc:'<path d="M2 14C3 8 7 3 14 2" stroke="#2a5a9a" fill="none"/><circle cx="2.5" cy="14" r="1.5" fill="#d83030"/><circle cx="6" cy="6.5" r="1.5" fill="#d83030"/><circle cx="13" cy="2.5" r="1.5" fill="#d83030"/>',
  rect:'<rect x=".5" y="2.5" width="15" height="11" fill="#b8d0f0" stroke="#2a5aa8"/>',
  smart:'<rect x="1.5" y="1.5" width="13" height="13" fill="#fff" stroke="#222" stroke-dasharray="2 1"/><path d="M8 4l1 3 3 1-3 1-1 3-1-3-3-1 3-1z" fill="#222"/>',
  ortho:'<path d="M1 1h14v3H6v11H3V4H1z" fill="#e0a8a0"/><path d="M8 8l4 3-1 1 3 3-1 1-3-3-1 1z" fill="#999"/>',
  snap:'<path d="M3 1v5M13 1v5M1 3h14" stroke="#a03030"/><path d="M2 10c2-3 8-3 11-3 3 4 1 8-3 8-4 0-7-2-8-5z" fill="#ddc878" stroke="#8a7030"/><circle cx="3" cy="7" r="1.5" fill="#555"/>',
  dyn:'<path d="M1 1h14M1 1v5M15 1v5M1 4h14" stroke="#a03030" fill="none"/><rect x="2.5" y="7.5" width="11" height="7" fill="#fff" stroke="#333"/><text x="8" y="13.5" text-anchor="middle" font-size="6" font-family="Liberation Mono,monospace" font-weight="700" fill="#000">12</text>',
  xpt:'<path d="M1 1 15 15M15 1 1 15" stroke="#1f5ab8" stroke-width="1.6"/>',
  perp:'<path d="M0 12h16" stroke="#2a78c8"/><path d="M8 1v9" stroke="#333"/><rect x="6.5" y="10.5" width="3" height="3" fill="#1f3f96"/>',
  mid:'<path d="M0 8h16" stroke="#7a8ea8" stroke-width="1.2"/><rect x="6" y="6" width="4" height="4" fill="#1f3f96"/>',
  vertex:'<path d="M8 1.5 15 7l-2.5 8h-9L1 7z" fill="#fff" stroke="#1f5ab8" stroke-width="1.2"/>',
  coord:'<path d="M1 3v1M1 7v1M1 11v1M4 14h1M8 14h1M12 14h1" stroke="#335"/><path d="M4 1l4 6 5-5M8 7v7" stroke="#1f5ab8" fill="none"/><circle cx="4" cy="2" r="1.2" fill="#335"/><circle cx="13" cy="2" r="1.2" fill="#335"/><path d="M1 14h3" stroke="#1f5ab8"/>',
  pinw:'<path d="M5.5 3h5v6h-5zM3.5 9h9M8 9v5" stroke="#fff" fill="none"/>', closew:'<path d="M4 4l8 8M12 4l-8 8" stroke="#fff"/>',
  plus2:'<path d="M1 5h7M4.5 1.5v7" stroke="#0a6a6a" stroke-width="2"/><path d="M7 11h8M11 7v8" stroke="#0a6a6a" stroke-width="2"/>',
  minus2:'<path d="M1 5h8" stroke="#111" stroke-width="2"/><path d="M6 11h9" stroke="#0a6a6a" stroke-width="2"/>',
  fclosed:'<path d="M1 3.5h5l1.5 1.5h7.5v9H1z" fill="#f5d572" stroke="#b09648"/><path d="M1.5 6h13v2h-13z" fill="#fdf0b8"/>',
  fopen:'<path d="M1 3.5h5l1.5 1.5h6V7H4l-3 6z" fill="#e8e0c4" stroke="#a09060"/><path d="M4 7h11.5l-3 7H1z" fill="#f5d98a" stroke="#a89048"/>',
  grid:'<path d="M1 4h14M1 8h14M1 12h14M4 1v14M8 1v14M12 1v14" stroke="#2a5ab0"/>',
  raft:'<rect x=".5" y=".5" width="15" height="15" fill="#bcd8f0" stroke="#143a80" stroke-width="1.2"/><rect x="3.5" y="3.5" width="9" height="9" fill="#fff" stroke="#143a80"/><path d="M0 6h3M0 10h3M13 6h3M13 10h3M6 0v3M10 0v3M6 13v3M10 13v3" stroke="#143a80"/>',
  col:'<path d="M1 1h14v3l-3 2H4L1 4z" fill="#6ea2dc" stroke="#1f4a96"/><path d="M5.5 6h5v9h-5z" fill="#d8e8f8" stroke="#1f4a96"/>',
  wall:'<rect x=".5" y="2.5" width="13" height="11" fill="#f6ede6" stroke="#d8804a"/><path d="M3 12l2-3 2 1 2-3 3 5z" fill="#aaa"/><path d="M14 5h2M14 8h2M14 11h2" stroke="#d8804a"/>',
  beam:'<path d="M1 1h14l-4 4v5l-3 5-3-2V5z" fill="#c8e0f4" stroke="#3a80c8"/><path d="M6 5l5-3" stroke="#3a80c8"/>',
  slab:'<path d="M4 1.5h10.5L12 14.5H1z" fill="#c8dcf4" stroke="#1f4a96"/><path d="M4 1.5 1 14.5" stroke="#1f4a96" stroke-width="2"/>',
  ctor:'<path d="M3 1h9v3h3v3h-2v2h2v3h-3v3H3v-3H1V9h2V7H1V4h2z" fill="#cfe0f4" stroke="#1f4a96"/><path d="M7 1v14" stroke="#1f4a96"/>',
  jd:'<path d="M1 6l6-3v9l-6 1z" fill="#8a93a0"/><path d="M5 3h4v10H5z" fill="#8a3a10"/><path d="M9 3l6-1v7l-6 3z" fill="#80a8e0"/>',
  eave:'<path d="M1 2h14v3H7v10H1z" fill="#f8e8dc" stroke="#c8643a"/><path d="M1 6h6M1 10h6M4 2v13" stroke="#c8643a"/>',
  rail:'<path d="M1 7l3-3h11l-3 3zM1 7h11v7H1zM12 7l3-3v7l-3 3z" fill="#7fb4e0" stroke="#2a4a7a"/><path d="M2 9h9" stroke="#dcecf8"/>',
  cap:'<rect x=".5" y="1.5" width="15" height="5" fill="#8ab8e8" stroke="#2a5a9a"/><rect x="5.5" y="6.5" width="5" height="8.5" fill="#c8c8c8" stroke="#888"/>',
  xmark:'<path d="M2 2l12 12M14 2 2 14" stroke="#1f5ab8"/><rect x="6" y="6" width="4" height="4" fill="#fff" stroke="#1f5ab8" stroke-width="1.2"/>',
  sqline:'<rect x="2.5" y="2.5" width="11" height="11" fill="none" stroke="#1f5ab8"/><path d="M1 1h3v3H1zM12 1h3v3h-3zM1 12h3v3H1zM12 12h3v3h-3z" fill="#fff" stroke="#1f5ab8"/>',
  hatch:'<path d="M0 4l4-4M0 8l8-8M0 12 12 0M0 16 16 0M4 16 16 4M8 16l8-8M12 16l4-4" stroke="#2a78d8"/>',
  dimc:'<path d="M1 0v3M13 0v3M1 1.5h12" stroke="#222"/><path d="M6 3v11l3-2.5 2 4 2-1-2-4h3.5z" fill="#c8c8c8" stroke="#777"/>',
  newl:'<rect x=".5" y="1.5" width="13" height="13" fill="#cfe4fa" stroke="#555"/><path d="M4 4h2v9H4zM8 4h2v9H8z" fill="#2a80d8"/><path d="M4 6.5h2M4 9.5h2M8 6.5h2M8 9.5h2" stroke="#fff"/>',
  chevR:'<path d="M2 1l4 3.5L2 8" stroke="#aaa" stroke-width="1.6" fill="none" transform="scale(1.1)"/>',
  chevD:'<path d="M1 2.5l4 4 4-4" stroke="#444" stroke-width="1.6" fill="none"/>',
  winlogo:'<path d="M0 2.5 6.8 1.5V7.5H0zM7.8 1.4 16 .2V7.5H7.8zM0 8.5H6.8V14.5L0 13.5zM7.8 8.5H16V15.8L7.8 14.6z" fill="#fff"/>',
  cortana:'<circle cx="8" cy="8" r="6.5" fill="none" stroke="#e8e8e8" stroke-width="1.8"/>',
  mic:'<rect x="5.5" y="1" width="5" height="9" rx="2.5" fill="none" stroke="#888"/><path d="M3.5 7c0 6 9 6 9 0M8 12v3M5 15h6" stroke="#888" fill="none"/>',
  taskv:'<path d="M3.5 2.5h9v11h-9zM1 5v6M15 5v6" stroke="#fff" stroke-width=".7" fill="none"/>',
  pin:'<g fill="#e0e0e0"><path d="M7 7C3 7 1 4 3 2c2-2 5-1 5 2z"/><path d="M9 7c0-4 3-6 5-4 2 2 1 5-2 5z"/><path d="M9 9c4 0 6 3 4 5-2 2-5 1-5-2z"/><path d="M7 9c0 4-3 6-5 4-2-2-1-5 2-5z"/></g>',
  ie2:'<path d="M13 9H4c0 4 5 5 8 2v2c-4 3-10 2-10-4 0-5 5-7 8-5 2 1 3 3 3 5zM10.5 7.5C10.5 4.5 5 4.5 4.5 7.5z" fill="#eee"/><path d="M1 15C1 11 7 3 15 1" fill="none" stroke="#ddd" stroke-width=".6"/>',
  spiral:'<path d="M10 4a5 5 0 1 0 2 6c1-4-4-6-5.5-3C5.5 9 9 11 10 8.5" stroke="#bbb" fill="none" stroke-width="1.2"/><path d="M11 5c0-4 4-4 4 0l1 2h-6z" fill="#f0b020"/>',
  edge:'<path d="M1 9C1 3 6 0 10 1c4 1 6 4 5 9H6c0 3 4 4 8 2v2.5c-5 2-11 1-13-5.5zM11 7C11 4 6 4 6 7z" fill="#1070d0"/>',
  ie:'<path d="M14 9H5c0 3 5 4 8 2v2c-4 3-10 2-10-4 0-5 6-7 9-5 2 1 2 3 2 5zM11 7.5C11 4.5 6 4.5 5 7.5z" fill="#2f9ae0"/><path d="M1 15C0 11 8 2 15 1c1 1 0 3-2 4" fill="none" stroke="#e8b020" stroke-width="1.2"/>',
  fold:'<path d="M1 2h6l2 2h6v11H1z" fill="#f5d060"/><path d="M1 7h14v8H1z" fill="#f8e08a"/><rect x="5" y="9" width="6" height="6" fill="#4aa8e0"/>',
  gre:'<circle cx="8" cy="8" r="7" fill="#76c030"/><path d="M12 9H5c0 2 4 3 6 1v2c-4 2-8 1-8-4 0-4 5-5 7-3 1 1 2 2 2 4z" fill="#fff"/><path d="M2 15 14 1" stroke="#2a6a10" fill="none" opacity=".7"/>',
  chevup:'<path d="M3 11l6-6 6 6" stroke="#e8e8e8" stroke-width="1.3" fill="none"/>',
  ball:'<circle cx="8" cy="8" r="7.5" fill="#7a8a50"/><circle cx="8" cy="8" r="6.2" fill="#e03c28"/>',
  bellw:'<path d="M8 1c3 0 4.5 3 4.5 6s1.5 4 2 5h-13c.5-1 2-2 2-5S5 1 8 1z" fill="#fff"/><path d="M5 13.5h6c-1 2-5 2-6 0z" fill="#fff"/>',
  batt:'<path d="M1 2v4M4 2v4M0 6h5v2H0zM2 8v4h3" stroke="#fff" fill="none"/><rect x="5.5" y="4.5" width="10" height="8" fill="none" stroke="#fff"/><rect x="7" y="6" width="7" height="5" fill="#fff"/>',
  wifi:'<path d="M1 10a10 10 0 0 1 12-4M3 12a7 7 0 0 1 8-3M5 14a4 4 0 0 1 4-2" stroke="#aaa" fill="none"/><circle cx="13" cy="13" r="1.5" fill="#fff"/>',
  vol:'<path d="M1 6h3l4-4v12l-4-4H1z" fill="none" stroke="#ddd"/><path d="M10 5c1 2 1 4 0 6M12 3c2 3 2 7 0 10M14 2c2 4 2 8 0 12" stroke="#aaa" fill="none"/>',
  kbd:'<rect x=".5" y="3.5" width="15" height="9" rx="1" fill="none" stroke="#fff"/><path d="M2 6h12M2 8h12" stroke="#fff" stroke-dasharray=".8 .6"/><path d="M4 10.5h8" stroke="#fff"/>',
  notif:'<path d="M.5 1.5h15v10h-6l-1.5 2.5-1.5-2.500h-6.500z" fill="none" stroke="#fff"/>'
};

// toolbar spec: "icon:text" tools, "|" separator, "grip", "car" lone arrow, "[width:text]" combos
// flags after the text: v/V drop arrow, ! disabled, ^ % checked, ~ checked first tool, # white
function renderBar(spec) {
  return spec.split(" ").map(tok => {
    if (tok === "|") return '<span class="t-sep"></span>';
    if (tok === "grip") return '<span class="t-grip"></span>';
    if (tok === "car") return '<i class="car car-solo"></i>';
    if (tok[0] === "[") {
      const [w, txt] = tok.slice(1, -1).split(":");
      return `<div class="combo d-flex" style="width:${w}px"><span>${txt}</span><i><i class="car"></i></i></div>`;
    }
    let [icon, txt] = tok.split(":");
    let cls = "tool", tail = "", m;
    while ((m = /[vV!^%~#]$/.exec(txt))) {
      const f = m[0];
      if (f === "v") tail = '<i class="car"></i>';
      if (f === "V") tail = '<i class="car car-wide"></i>';
      if (f === "!") cls += " tool-off";
      if (f === "^") cls += " tool-on";
      if (f === "%") cls += " tool-on2";
      if (f === "~") cls += " tool-on tool-first";
      if (f === "#") cls += " tool-white";
      txt = txt.slice(0, -1);
    }
    return `<div class="${cls}"><svg class="ico" data-i="${icon}"></svg>${txt ? `<span>${txt}</span>` : ""}${tail}</div>`;
  }).join("");
}

document.querySelectorAll("[data-spec]").forEach(el => {
  el.insertAdjacentHTML("afterbegin", renderBar(el.dataset.spec));
});

// menu
document.getElementById("menus").innerHTML = ["文件(F)","编辑(E)","楼层(L)","构件(N)","绘图(D)","修改(M)","钢筋量(Q)","视图(V)","工具(T)","云应用(Y)","BIM应用(I)","在线服务(S)","帮助(H)","版本号(B)"]
  .map(t => `<div class="mi">${t}</div>`).join("");

// component tree
const lat = s => s.replace(/[\x20-\x7e]+/g, m => `<span class="lat">${m}</span>`);
const tree = [
  [0,"常用构件类型",1,[["grid","轴网(J)"],["raft","筏板基础(M)"],["col","框柱(Z)"],["wall","剪力墙(Q)"],["beam","梁(L)"],["slab","现浇板(B)"]]],
  [0,"轴线"],
  [0,"柱",1,[["col","框柱(Z)"],["col","暗柱(Z)"],["col","端柱(Z)"],["ctor","构造柱(Z)"]]],
  [0,"墙"],[0,"门窗洞"],[0,"梁"],[0,"板"],[0,"基础"],
  [0,"其它",1,[["jd","后浇带(JD)"],["eave","挑檐(T)"],["rail","栏板(K)"],["cap","压顶(YD)"]]],
  [0,"自定义",1,[["xmark","自定义点"],["sqline","自定义线(X)",1],["hatch","自定义面"],["dimc","尺寸标注(W)"]]],
  [0,"CAD识别",0,null,1]
];
const newMark = tag => `<svg class="new-ico" data-i="newl"></svg><span class="new-tag">${tag}</span>`;
document.getElementById("tree").innerHTML = tree.map(g => {
  const open = g[2] === 1;
  let html = `<div class="tree-row lv0${open ? " is-open" : ""}"><svg class="chev" viewBox="0 0 10 10" data-b="${open ? "chevD" : "chevR"}"></svg><svg class="ico" data-i="${open ? "fopen" : "fclosed"}"></svg><span class="lb">${lat(g[1])}</span>${g[4] ? '<span class="g4"></span>' + newMark("NEW") : ""}</div>`;
  (g[3] || []).forEach((c, i, a) => {
    const body = `<svg class="ico" data-i="${c[0]}"></svg><span class="lb">${lat(c[1])}</span>`;
    html += `<div class="tree-row lv1${i === a.length - 1 ? " is-last" : ""}">${c[2] ? `<span class="tree-sel">${body}</span>${newMark("NE")}` : body}</div>`;
  });
  return html;
}).join("");

// taskbar apps: [icon, slot width, state]; "" leaves a gap, "sep" a divider
const apps = [["taskv",49],["pin",48],["ie2",58],["spiral",36],["sep",40],["edge",36],["ie",64],["fold",32],["",13],["gre",40,"slot-open"],["",5],["app",48,"slot-on"]];
document.getElementById("apps").innerHTML = apps.map(a => {
  if (a[0] === "sep") return `<div class="slot" style="width:${a[1]}px"><div class="t-div"></div></div>`;
  return `<div class="slot ${a[2] || ""}" style="width:${a[1]}px">${a[0] ? `<svg class="ico" data-i="${a[0]}"></svg>` : ""}</div>`;
}).join("");

document.querySelectorAll("#stat [data-l]").forEach(el => { el.innerHTML = lat(el.textContent); });

document.querySelectorAll("svg[data-i]").forEach(el => {
  el.setAttribute("viewBox", "0 0 16 16");
  el.innerHTML = I[el.dataset.i] || "";
});
document.querySelectorAll("svg[data-b]").forEach(el => { el.innerHTML = I[el.dataset.b]; });
</script>
<script src="https://cdn.jsdelivr.net/npm/bootstrap@5.3.3/dist/js/bootstrap.bundle.min.js"></script>
</body>
</html>
